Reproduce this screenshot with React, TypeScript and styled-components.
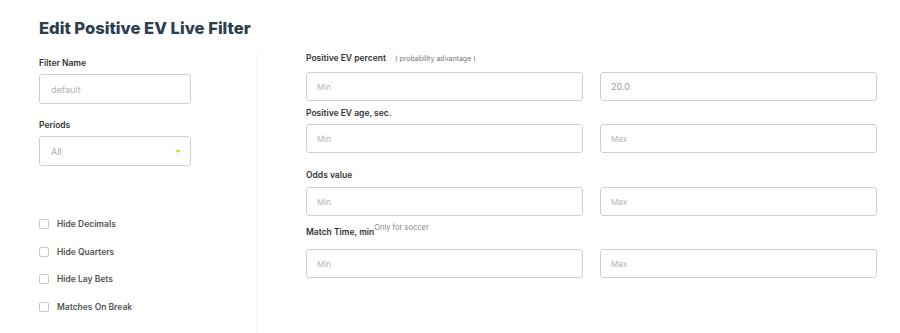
import React from "react";
import styled, { createGlobalStyle } from "styled-components";

const GlobalStyle = createGlobalStyle`
  html, body { margin: 0; padding: 0; background: #ffffff; }
  body { font-family: Inter, "Noto Sans", sans-serif; width: 900px; height: 333px; overflow: hidden; }
  * { box-sizing: border-box; }
`;

const Page = styled.div`
  padding: 16px 23px 0 39px;
`;

const Title = styled.h1`
  margin: 0 0 12px 0;
  font-size: 16.6px;
  line-height: 24px;
  font-weight: 800;
  color: #2c3e50;
`;

const Columns = styled.div`
  display: grid;
  grid-template-columns: 218px 1fr;
  height: 281px;
`;

const LeftCol = styled.div`
  border-right: 1px solid #f6f6f6;
  padding-top: 5px;
  display: flex;
  flex-direction: column;
`;

const RightCol = styled.div`
  padding-left: 49px;
  display: flex;
  flex-direction: column;
`;

const Label = styled.div<{ $mb: number; $mt?: number }>`
  font-size: 8.5px;
  line-height: 12px;
  font-weight: 600;
  color: #333;
  margin-top: ${(p) => p.$mt ?? 0}px;
  margin-bottom: ${(p) => p.$mb}px;
  white-space: nowrap;
`;

const Hint = styled.span`
  font-size: 7px;
  font-weight: 400;
  color: #777;
  margin-left: 9px;
`;

const Sup = styled.sup`
  font-size: 7.5px;
  font-weight: 400;
  color: #888;
  vertical-align: 5px;
  line-height: 0;
`;

const TextInput = styled.input<{ $h?: number; $fs?: number }>`
  display: block;
  width: 100%;
  height: ${(p) => p.$h ?? 29}px;
  border: 1px solid #cfcfcf;
  border-radius: 3px;
  padding: 0 10px;
  font-family: Inter, "Noto Sans", sans-serif;
  font-size: ${(p) => p.$fs ?? 8}px;
  color: #999;
  background: #fff;
  outline: none;
  &::placeholder { color: #b3b3b3; }
`;

const LeftField = styled.div`
  width: 152px;
`;

const Select = styled.div`
  width: 152px;
  height: 30px;
  border: 1px solid #cfcfcf;
  border-radius: 3px;
  padding: 0 9px 0 11px;
  display: flex;
  align-items: center;
  justify-content: space-between;
  font-size: 9px;
  color: #aaa;
`;

const Caret = styled.span`
  width: 0;
  height: 0;
  border-left: 3px solid transparent;
  border-right: 3px solid transparent;
  border-top: 3px solid #f5c518;
`;

const CheckList = styled.div`
  margin-top: 52px;
  display: flex;
  flex-direction: column;
  gap: 15.5px;
`;

const CheckRow = styled.label`
  display: flex;
  align-items: center;
  gap: 8px;
  height: 12px;
  font-size: 8.5px;
  font-weight: 600;
  color: #555;
`;

const Box = styled.span`
  width: 10px;
  height: 10px;
  border: 1px solid #c8c8c8;
  border-radius: 2px;
  background: #fff;
`;

const Pair = styled.div<{ $mb: number }>`
  display: grid;
  grid-template-columns: 1fr 1fr;
  column-gap: 17px;
  margin-bottom: ${(p) => p.$mb}px;
`;

const checks = ["Hide Decimals", "Hide Quarters", "Hide Lay Bets", "Matches On Break"];

export default function App() {
  return (
    <>
      <GlobalStyle />
      <Page>
        <Title>Edit Positive EV Live Filter</Title>
        <Columns>
          <LeftCol>
            <Label $mb={5}>Filter Name</Label>
            <LeftField>
              <TextInput $h={30} $fs={9} placeholder="default" style={{ paddingLeft: 11 }} />
            </LeftField>
            <Label $mt={15} $mb={5}>Periods</Label>
            <Select>
              <span>All</span>
              <Caret />
            </Select>
            <CheckList>
              {checks.map((c) => (
                <CheckRow key={c}>
                  <Box />
                  {c}
                </CheckRow>
              ))}
            </CheckList>
          </LeftCol>
          <RightCol>
            <Label $mb={7}>
              Positive EV percent<Hint>( probability advantage )</Hint>
            </Label>
            <Pair $mb={6}>
              <TextInput placeholder="Min" />
              <TextInput $fs={9} defaultValue="20.0" />
            </Pair>
            <Label $mb={5}>Positive EV age, sec.</Label>
            <Pair $mb={16}>
              <TextInput placeholder="Min" />
              <TextInput placeholder="Max" />
            </Pair>
            <Label $mb={6}>Odds value</Label>
            <Pair $mb={10}>
              <TextInput placeholder="Min" />
              <TextInput placeholder="Max" />
            </Pair>
            <Label $mb={11}>
              Match Time, min<Sup>Only for soccer</Sup>
            </Label>
            <Pair $mb={0}>
              <TextInput placeholder="Min" />
              <TextInput placeholder="Max" />
            </Pair>
          </RightCol>
        </Columns>
      </Page>
    </>
  );
}
